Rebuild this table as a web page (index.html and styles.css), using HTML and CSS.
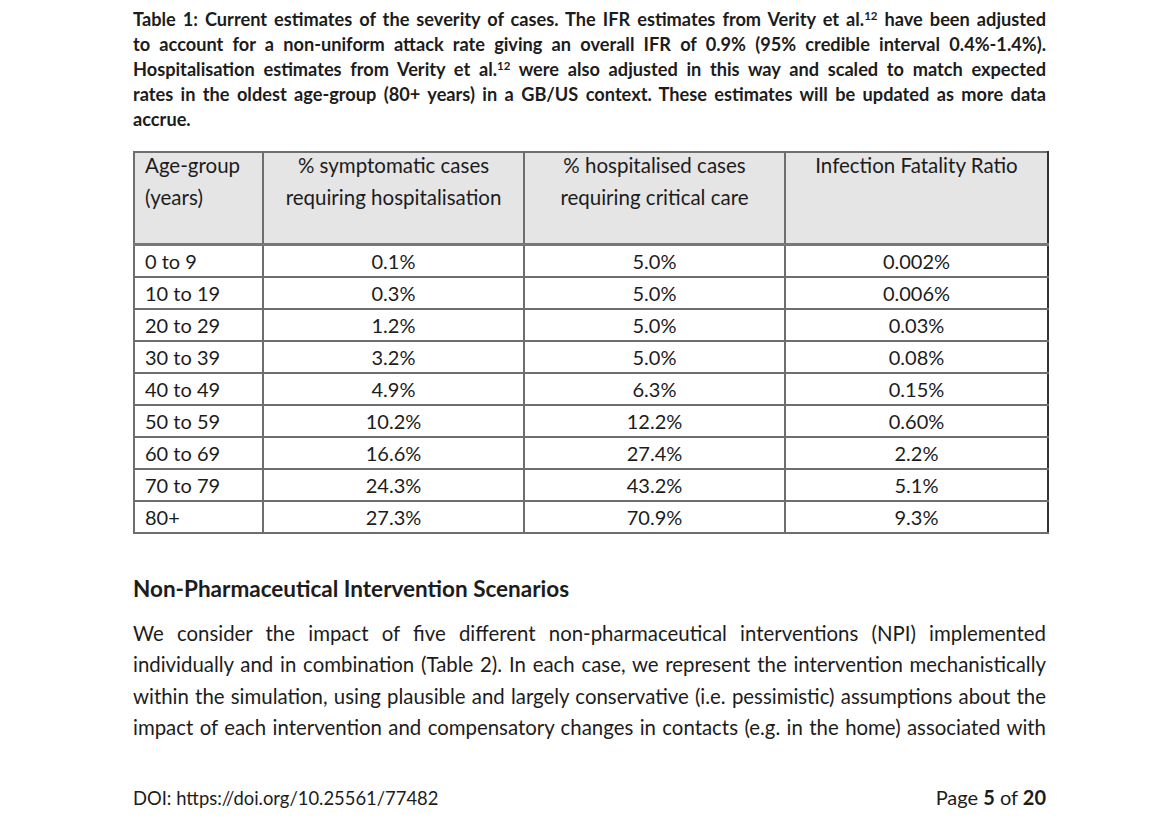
FILE: index.html
```html
<!DOCTYPE html>
<html lang="en">
<head>
<meta charset="utf-8">
<title>Table 1</title>
<link rel="stylesheet" href="styles.css">
</head>
<body>
<div class="page">
  <p class="caption">
    <span class="jl">Table 1: Current estimates of the severity of cases. The IFR estimates from Verity et al.<sup>12</sup> have been adjusted</span>
    <span class="jl">to account for a non-uniform attack rate giving an overall IFR of 0.9% (95% credible interval 0.4%-1.4%).</span>
    <span class="jl">Hospitalisation estimates from Verity et al.<sup>12</sup> were also adjusted in this way and scaled to match expected</span>
    <span class="jl">rates in the oldest age-group (80+ years) in a GB/US context. These estimates will be updated as more data</span>
    <span class="last">accrue.</span>
  </p>

  <table class="sev">
    <colgroup>
      <col class="c1"><col class="c2"><col class="c3"><col class="c4">
    </colgroup>
    <thead>
      <tr>
        <th class="age"><div class="hd">Age-group<br>(years)</div></th>
        <th><div class="hd">% symptomatic cases<br>requiring hospitalisation</div></th>
        <th><div class="hd">% hospitalised cases<br>requiring critical care</div></th>
        <th><div class="hd">Infection Fatality Ratio</div></th>
      </tr>
    </thead>
    <tbody>
      <tr><td class="age">0 to 9</td><td>0.1%</td><td>5.0%</td><td>0.002%</td></tr>
      <tr><td class="age">10 to 19</td><td>0.3%</td><td>5.0%</td><td>0.006%</td></tr>
      <tr><td class="age">20 to 29</td><td>1.2%</td><td>5.0%</td><td>0.03%</td></tr>
      <tr><td class="age">30 to 39</td><td>3.2%</td><td>5.0%</td><td>0.08%</td></tr>
      <tr><td class="age">40 to 49</td><td>4.9%</td><td>6.3%</td><td>0.15%</td></tr>
      <tr><td class="age">50 to 59</td><td>10.2%</td><td>12.2%</td><td>0.60%</td></tr>
      <tr><td class="age">60 to 69</td><td>16.6%</td><td>27.4%</td><td>2.2%</td></tr>
      <tr><td class="age">70 to 79</td><td>24.3%</td><td>43.2%</td><td>5.1%</td></tr>
      <tr><td class="age">80+</td><td>27.3%</td><td>70.9%</td><td>9.3%</td></tr>
    </tbody>
  </table>

  <h2 class="heading">Non-Pharmaceutical Intervention Scenarios</h2>

  <p class="body">
    <span class="jl">We consider the impact of five different non-pharmaceutical interventions (NPI) implemented</span>
    <span class="jl">individually and in combination (Table 2). In each case, we represent the intervention mechanistically</span>
    <span class="jl">within the simulation, using plausible and largely conservative (i.e. pessimistic) assumptions about the</span>
    <span class="jl">impact of each intervention and compensatory changes in contacts (e.g. in the home) associated with</span>
  </p>

  <footer class="foot">
    <span class="doi">DOI: https://doi.org/10.25561/77482</span>
    <span class="pg">Page <b>5</b> of <b>20</b></span>
  </footer>
</div>
</body>
</html>
```

FILE: styles.css
```css
html, body {
  margin: 0;
  padding: 0;
  background: #ffffff;
}

body {
  font-family: Lato, "Open Sans", "Liberation Sans", sans-serif;
  color: #1c1c1c;
}

.page {
  width: 913px;
  margin-left: 133px;
  padding-top: 7px;
}

.jl {
  display: block;
  text-align: justify;
  text-align-last: justify;
  white-space: nowrap;
}

.last {
  display: block;
}

.caption {
  margin: 0;
  font-size: 18.2px;
  font-weight: 700;
  line-height: 25px;
}

.caption sup {
  font-size: 11.5px;
  line-height: 0;
  vertical-align: 6px;
}

.sev {
  margin-top: 19px;
  border-collapse: collapse;
  width: 914px;
  table-layout: fixed;
  font-size: 20px;
}

.c1 { width: 129px; }
.c2 { width: 261px; }
.c3 { width: 261px; }
.c4 { width: 263px; }

.sev th,
.sev td {
  border: 2px solid #6e6e6e;
  text-align: center;
  font-weight: 400;
}

.sev th {
  background: #e5e5e5;
  height: 90px;
  vertical-align: top;
  line-height: 32px;
  padding: 0 4px;
  font-size: 20.5px;
}

.hd {
  margin-top: -4px;
}

.sev thead tr {
  border-bottom: 3px solid #777;
}

.sev td {
  height: 30px;
  padding: 0 4px;
  line-height: 30px;
}

.sev .age {
  text-align: left;
  padding-left: 10px;
}

.sev td:last-child,
.sev th:last-child {
  border-right-color: #333;
}

.heading {
  margin: 40px 0 0;
  font-size: 22.5px;
  font-weight: 700;
  line-height: 30px;
}

.body {
  margin: 14px 0 0;
  font-size: 20.4px;
  line-height: 31.3px;
}

.foot {
  display: flex;
  justify-content: space-between;
  align-items: baseline;
  margin-top: 42px;
  font-size: 20px;
}

.doi {
  display: inline-block;
  transform: scaleX(0.92);
  transform-origin: left center;
}
```
